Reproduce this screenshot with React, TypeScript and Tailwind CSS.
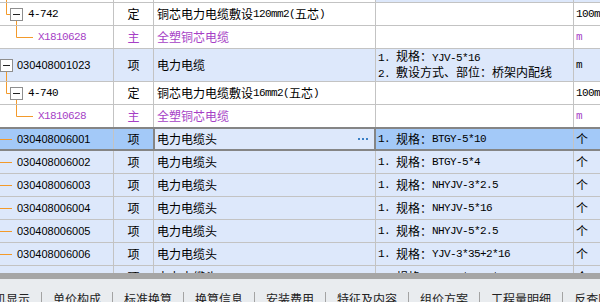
import React from "react";

type Tree = "top" | "sub" | "child" | "root" | "leaf";

type Row = {
  code: string;
  tree: Tree;
  kind: string;
  name: string;
  desc: string[];
  unit: string;
  purple?: boolean;
  blue?: boolean;
  h: string;
  svgH: number;
};

const ROWS: Row[] = [
  { code: "", tree: "top", kind: "", name: "", desc: [], unit: "", h: "h-[3px]", svgH: 2 },
  { code: "4-742", tree: "sub", kind: "定", name: "铜芯电力电缆敷设120mm2(五芯)", desc: [], unit: "100m", h: "h-[23px]", svgH: 22 },
  { code: "X1810628", tree: "child", kind: "主", name: "全塑铜芯电缆", desc: [], unit: "m", purple: true, h: "h-[23px]", svgH: 22 },
  {
    code: "030408001023",
    tree: "root",
    kind: "项",
    name: "电力电缆",
    desc: ["1. 规格：YJV-5*16", "2. 敷设方式、部位：桥架内配线"],
    unit: "m",
    blue: true,
    h: "h-[33px]",
    svgH: 32,
  },
  { code: "4-740", tree: "sub", kind: "定", name: "铜芯电力电缆敷设16mm2(五芯)", desc: [], unit: "100m", h: "h-[23px]", svgH: 22 },
  { code: "X1810628", tree: "child", kind: "主", name: "全塑铜芯电缆", desc: [], unit: "m", purple: true, h: "h-[22px]", svgH: 22 },
];

const ITEMS = [
  { code: "030408006002", spec: "BTGY-5*4" },
  { code: "030408006003", spec: "NHYJV-3*2.5" },
  { code: "030408006004", spec: "NHYJV-5*16" },
  { code: "030408006005", spec: "NHYJV-5*2.5" },
  { code: "030408006006", spec: "YJV-3*35+2*16" },
  { code: "030408006007", spec: "YJV-5*35+2*16" },
];

const TABS = ["工料机显示", "单价构成", "标准换算", "换算信息", "安装费用", "特征及内容", "组价方案", "工程量明细", "反查图形工程量", "说明信息"];

const ORANGE = "#f39a2b";

// ascii runs look like the 6px-wide bitmap font of the original
const Mixed = ({ text }: { text: string }) => (
  <>
    {text
      .split(/([\x20-\x7e]+)/)
      .filter(Boolean)
      .map((part, i) =>
        /^[\x20-\x7e]+$/.test(part) ? (
          <span key={i} className="font-['Liberation_Mono',monospace] text-[11px] tracking-[-0.6px]">
            {part}
          </span>
        ) : (
          <span key={i}>{part}</span>
        )
      )}
  </>
);

const TreeLines = ({ tree, h }: { tree: Tree; h: number }) => {
  const c = Math.floor(h / 2) + 0.5;
  return (
    <svg className="absolute left-0 top-0 pointer-events-none" width={40} height={h}>
      {tree === "top" && <line x1={6.5} y1={0} x2={6.5} y2={h} stroke={ORANGE} />}
      {tree === "sub" && (
        <>
          <polyline points={`6.5,0 6.5,${c} 10.5,${c}`} fill="none" stroke={ORANGE} />
          <line x1={16.5} y1={c + 6} x2={16.5} y2={h} stroke={ORANGE} />
          <rect x={10.5} y={c - 6} width={12} height={12} fill="#fff" stroke="#8e8e8e" />
          <line x1={13} y1={c} x2={20} y2={c} stroke="#222" />
        </>
      )}
      {tree === "child" && <polyline points={`16.5,0 16.5,${c} 33,${c}`} fill="none" stroke={ORANGE} />}
      {tree === "root" && (
        <>
          <line x1={6.5} y1={c + 6} x2={6.5} y2={h} stroke={ORANGE} />
          <rect x={0.5} y={c - 6} width={12} height={12} fill="#fff" stroke="#8e8e8e" />
          <line x1={3} y1={c} x2={10} y2={c} stroke="#222" />
        </>
      )}
      {tree === "leaf" && <line x1={0} y1={c} x2={12} y2={c} stroke={ORANGE} />}
    </svg>
  );
};

const codeClass = (tree: Tree) => {
  if (tree === "sub") return "pl-[28px] font-['Liberation_Mono',monospace] text-[11px] tracking-[-0.6px]";
  if (tree === "child") return "pl-[38px] font-['Liberation_Mono',monospace] text-[11px] tracking-[-0.6px]";
  return "pl-[17px] font-['Liberation_Sans',sans-serif] text-[11px]";
};

const App: React.FC = () => {
  return (
    <div className="flex flex-col w-[600px] h-[302px] overflow-hidden bg-white text-[12px] text-black font-['Noto_Sans_CJK_SC',sans-serif]">
      {/* 表格 */}
      <div className="h-[273px] overflow-hidden">
        {ROWS.map((r, idx) => {
          const color = r.purple ? "text-[#a63fc6]" : "text-black";
          const bg = r.blue ? "bg-[#dde8fb]" : "bg-white";
          const isLast = idx === ROWS.length - 1;
          return (
            <div key={idx} className={`flex ${r.h} ${isLast ? "" : "border-b border-[#c3c3c3]"}`}>
              <div className={`relative flex items-center w-[114px] shrink-0 border-r border-[#c3c3c3] ${bg} ${color} ${codeClass(r.tree)}`}>
                <TreeLines tree={r.tree} h={r.svgH} />
                <span className="relative">{r.code}</span>
              </div>
              <div className={`flex items-center justify-center w-[40px] shrink-0 border-r border-[#c3c3c3] ${bg} ${color}`}>{r.kind}</div>
              <div className={`flex items-center w-[222px] shrink-0 pl-[3px] whitespace-pre border-r border-[#c3c3c3] ${bg} ${color}`}>
                <Mixed text={r.name} />
              </div>
              <div
                className={`flex flex-col justify-center w-[198px] shrink-0 pl-[2px] leading-[14px] whitespace-pre border-r border-[#c3c3c3] ${
                  r.tree === "top" || r.blue ? "bg-[#dde8fb]" : "bg-white"
                }`}
              >
                {r.desc.map((d) => (
                  <div key={d}>
                    <Mixed text={d} />
                  </div>
                ))}
              </div>
              <div
                className={`flex items-center flex-1 pl-[2px] whitespace-pre ${color} ${
                  r.tree === "top" || r.blue ? "bg-[#dde8fb]" : "bg-white"
                }`}
              >
                <Mixed text={r.unit} />
              </div>
            </div>
          );
        })}

        {/* 当前选中行 */}
        <div className="flex h-[24px] border-y-2 border-[#858585]">
          <div className="relative flex items-center w-[114px] shrink-0 pl-[17px] border-r border-[#c3c3c3] bg-[#a3c9f8] font-['Liberation_Sans',sans-serif] text-[11px]">
            <TreeLines tree="leaf" h={20} />
            <span className="relative">030408006001</span>
          </div>
          <div className="flex items-center justify-center w-[39px] shrink-0 bg-[#a3c9f8]">项</div>
          <div className="flex items-center justify-between w-[223px] shrink-0 pl-[2px] pr-[6px] border-x-2 border-[#858585] bg-[#dde8fb]">
            <span>电力电缆头</span>
            <div className="flex gap-[2px]">
              <span className="w-[2px] h-[2px] bg-[#3a7fc5]"></span>
              <span className="w-[2px] h-[2px] bg-[#3a7fc5]"></span>
              <span className="w-[2px] h-[2px] bg-[#3a7fc5]"></span>
            </div>
          </div>
          <div className="flex items-center w-[198px] shrink-0 pl-[2px] whitespace-pre border-r border-[#c3c3c3] bg-[#a3c9f8]">
            <Mixed text="1. 规格：BTGY-5*10" />
          </div>
          <div className="flex items-center flex-1 pl-[2px] bg-[#a3c9f8]">个</div>
        </div>

        {ITEMS.map((it) => (
          <div key={it.code} className="flex h-[23px] border-b border-[#c3c3c3] bg-[#dde8fb]">
            <div className="relative flex items-center w-[114px] shrink-0 pl-[17px] border-r border-[#c3c3c3] font-['Liberation_Sans',sans-serif] text-[11px]">
              <TreeLines tree="leaf" h={22} />
              <span className="relative">{it.code}</span>
            </div>
            <div className="flex items-center justify-center w-[40px] shrink-0 border-r border-[#c3c3c3]">项</div>
            <div className="flex items-center w-[222px] shrink-0 pl-[3px] border-r border-[#c3c3c3]">电力电缆头</div>
            <div className="flex items-center w-[198px] shrink-0 pl-[2px] whitespace-pre border-r border-[#c3c3c3]">
              <Mixed text={`1. 规格：${it.spec}`} />
            </div>
            <div className="flex items-center flex-1 pl-[2px]">个</div>
          </div>
        ))}
      </div>

      {/* 分隔条 */}
      <div className="h-[6px] shrink-0 bg-[#a6a6a6]"></div>

      {/* 底部页签 */}
      <div className="flex-1 bg-[#e9ecef] overflow-hidden">
        <div className="flex items-start -ml-[41px] pt-[11px] whitespace-nowrap text-[12px] text-[#222]">
          {TABS.map((t, i) => (
            <React.Fragment key={t}>
              {i > 0 && <span className="mt-[2px] h-[14px] w-px shrink-0 bg-[#a3a3a3]"></span>}
              <span className="px-[11px] leading-[17px]">{t}</span>
            </React.Fragment>
          ))}
        </div>
      </div>
    </div>
  );
};

export default App;
